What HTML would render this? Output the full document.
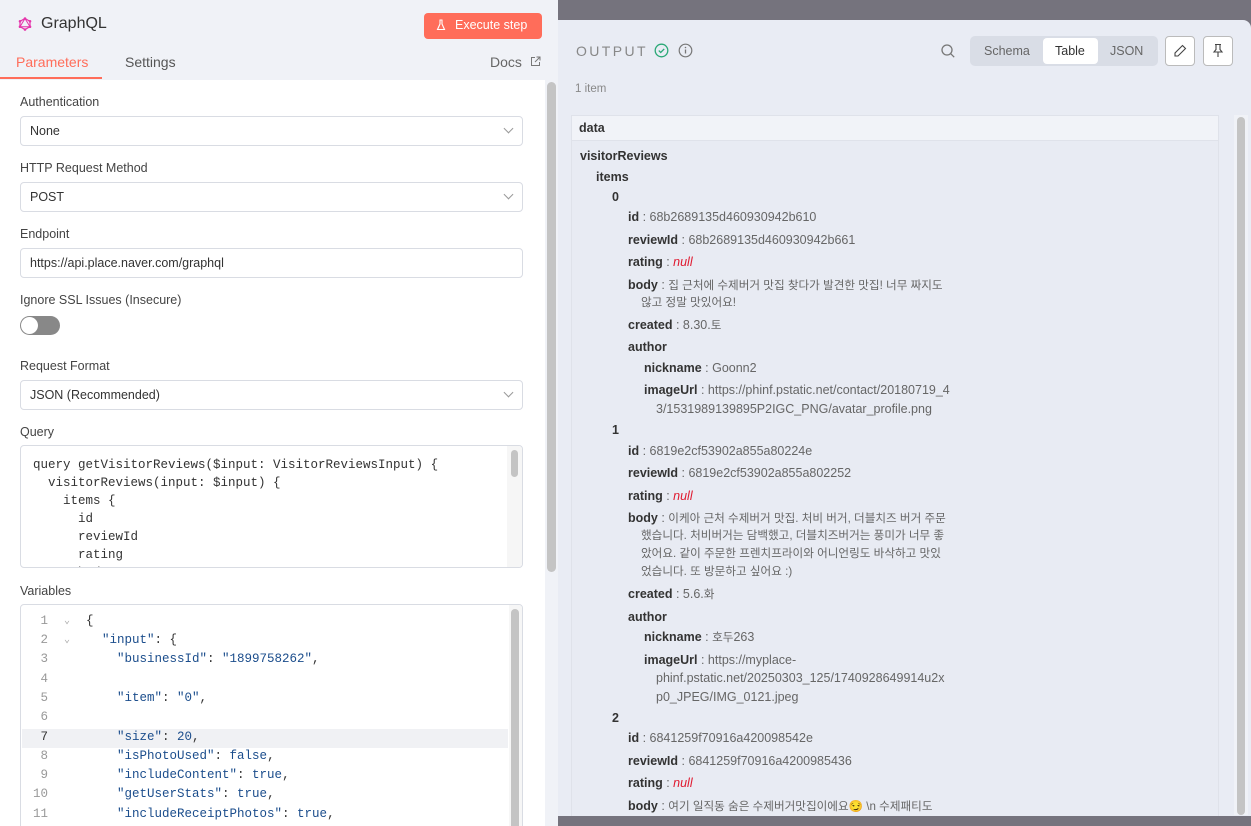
<!DOCTYPE html>
<html><head><meta charset="utf-8"><style>
*{box-sizing:border-box;margin:0;padding:0}
body{width:1251px;height:826px;overflow:hidden;background:#75737d;font-family:"Liberation Sans","Noto Sans CJK KR",sans-serif;font-size:12.5px;color:#333;position:relative}
.a{position:absolute;white-space:nowrap}
#left{position:absolute;left:0;top:0;width:558px;height:826px;background:#fff;overflow:hidden}
#lh{position:absolute;left:0;top:0;width:558px;height:80px;background:#f0f2f7}
.lbl{position:absolute;left:20px;font-size:12.5px;color:#444}
.sel{position:absolute;left:20px;width:503px;height:30px;border:1px solid #d9dce3;border-radius:4px;background:#fff;padding:7px 0 0 9px;color:#333}
.sel .ch{position:absolute;right:10px;top:8px;width:7px;height:7px;border-right:1px solid #999;border-bottom:1px solid #999;transform:rotate(45deg)}
.mono{font-family:"Liberation Mono",monospace;font-size:12.5px}
#right{position:absolute;left:558px;top:20px;width:693px;height:796px;background:#e9ecf4;border-top-right-radius:8px}
.k{font-weight:bold;color:#333}
.v{color:#666}
.r{position:absolute;white-space:nowrap;font-size:12.5px;line-height:16px;height:16px}
.kr{font-size:11.6px}
.n{color:#e0192f;font-style:italic}
.ln{position:absolute;left:20px;width:28px;text-align:right;color:#999}
.cd{position:absolute;left:88px;color:#1b4d8c}
</style></head><body>
<div id="left">
<div id="lh">
<svg class="a" style="left:18px;top:17px" width="14" height="14" viewBox="0 0 14 14"><polygon points="7,1.5 12,4.3 12,9.7 7,12.5 2,9.7 2,4.3" fill="none" stroke="#e535ab" stroke-width="1.2"/><polygon points="7,1.5 12,9.7 2,9.7" fill="none" stroke="#e535ab" stroke-width="1"/><circle cx="7" cy="1.5" r="1.3" fill="#e535ab"/><circle cx="12" cy="4.3" r="1.3" fill="#e535ab"/><circle cx="12" cy="9.7" r="1.3" fill="#e535ab"/><circle cx="7" cy="12.5" r="1.3" fill="#e535ab"/><circle cx="2" cy="9.7" r="1.3" fill="#e535ab"/><circle cx="2" cy="4.3" r="1.3" fill="#e535ab"/></svg>
<div class="a" style="left:41px;top:15px;font-size:16px;color:#333">GraphQL</div>
<div class="a" style="left:424px;top:13px;width:118px;height:26px;background:#ff6d5a;border-radius:4px;color:#fff;font-size:12.5px;padding:5px 0 0 31px">Execute step</div>
<svg class="a" style="left:436px;top:19px" width="10" height="12" viewBox="0 0 10 12"><path d="M3.5 1h3M4 1v4L1.5 10.5h7L6 5V1" fill="none" stroke="#fff" stroke-width="1.1"/></svg>
<div class="a" style="left:16px;top:54px;font-size:14px;color:#ff6d5a">Parameters</div>
<div class="a" style="left:0;top:77px;width:102px;height:2px;background:#ff6d5a"></div>
<div class="a" style="left:125px;top:54px;font-size:14px;color:#555">Settings</div>
<div class="a" style="left:490px;top:54px;font-size:14px;color:#666">Docs</div>
<svg class="a" style="left:530px;top:56px" width="11" height="11" viewBox="0 0 11 11"><path d="M5 1.5H1.5v8h8V6M6.5 1h3.5v3.5M10 1L5 6" fill="none" stroke="#777" stroke-width="1"/></svg>
</div>
<div class="a" style="left:545px;top:80px;width:13px;height:746px;background:#f0f2f7"></div>
<div class="a" style="left:547px;top:82px;width:9px;height:490px;background:#c4c4c4;border-radius:5px"></div>
<div class="lbl" style="top:95px">Authentication</div>
<div class="sel" style="top:116px">None<div class="ch"></div></div>
<div class="lbl" style="top:161px">HTTP Request Method</div>
<div class="sel" style="top:182px">POST<div class="ch"></div></div>
<div class="lbl" style="top:227px">Endpoint</div>
<div class="sel" style="top:248px">https://api.place.naver.com/graphql</div>
<div class="lbl" style="top:293px">Ignore SSL Issues (Insecure)</div>
<div class="a" style="left:20px;top:316px;width:40px;height:19px;border-radius:10px;background:#888"></div>
<div class="a" style="left:21px;top:317px;width:17px;height:17px;border-radius:50%;background:#fff"></div>
<div class="lbl" style="top:359px">Request Format</div>
<div class="sel" style="top:380px">JSON (Recommended)<div class="ch"></div></div>
<div class="lbl" style="top:425px">Query</div>
<div class="a" style="left:20px;top:445px;width:503px;height:123px;border:1px solid #d9dce3;border-radius:4px;overflow:hidden">
<pre class="mono" style="position:absolute;left:12px;top:10px;line-height:18px;color:#333">query getVisitorReviews($input: VisitorReviewsInput) {
  visitorReviews(input: $input) {
    items {
      id
      reviewId
      rating
      body</pre>
<div class="a" style="left:486px;top:0;width:16px;height:122px;background:#f6f6f6"></div>
<div class="a" style="left:490px;top:4px;width:7px;height:27px;background:#c4c4c4;border-radius:4px"></div>
</div>
<div class="lbl" style="top:584px">Variables</div>
<div class="a mono" style="left:20px;top:604px;width:503px;height:230px;border:1px solid #d9dce3;border-radius:4px;overflow:hidden;line-height:19px">
<div class="a" style="left:1px;top:124px;width:486px;height:19px;background:#f0f1f4"></div>
<div class="a" style="left:488px;top:0;width:14px;height:230px;background:#f6f6f6"></div>
<div class="a" style="left:490px;top:4px;width:8px;height:226px;background:#c4c4c4;border-radius:4px"></div>
</div>
<div class="mono" style="position:absolute;left:0;top:612px;width:520px;line-height:19.3px">
<div class="ln" style="top:0">1</div><div class="ln" style="top:19px">2</div><div class="ln" style="top:38px">3</div><div class="ln" style="top:58px">4</div><div class="ln" style="top:77px">5</div><div class="ln" style="top:96px">6</div><div class="ln" style="top:116px;color:#333">7</div><div class="ln" style="top:135px">8</div><div class="ln" style="top:154px">9</div><div class="ln" style="top:173px">10</div><div class="ln" style="top:193px">11</div>
<div class="a" style="left:64px;top:0;color:#aaa;font-size:10px">⌄</div><div class="a" style="left:64px;top:19px;color:#aaa;font-size:10px">⌄</div>
<div class="cd" style="left:86px;top:0;color:#333">{</div>
<div class="cd" style="left:102px;top:19px">"input"<span style="color:#333">: {</span></div>
<div class="cd" style="left:117px;top:38px">"businessId"<span style="color:#333">: </span>"1899758262"<span style="color:#333">,</span></div>
<div class="cd" style="left:117px;top:77px">"item"<span style="color:#333">: </span>"0"<span style="color:#333">,</span></div>
<div class="cd" style="left:117px;top:116px">"size"<span style="color:#333">: </span>20<span style="color:#333">,</span></div>
<div class="cd" style="left:117px;top:135px">"isPhotoUsed"<span style="color:#333">: </span>false<span style="color:#333">,</span></div>
<div class="cd" style="left:117px;top:154px">"includeContent"<span style="color:#333">: </span>true<span style="color:#333">,</span></div>
<div class="cd" style="left:117px;top:173px">"getUserStats"<span style="color:#333">: </span>true<span style="color:#333">,</span></div>
<div class="cd" style="left:117px;top:193px">"includeReceiptPhotos"<span style="color:#333">: </span>true<span style="color:#333">,</span></div>
</div>
</div>

<div id="right"></div>
<div class="a" style="left:576px;top:43px;font-size:14px;letter-spacing:2.4px;color:#888">OUTPUT</div>
<svg class="a" style="left:654px;top:43px" width="15" height="15" viewBox="0 0 15 15"><circle cx="7.5" cy="7.5" r="6.3" fill="none" stroke="#2aa876" stroke-width="1.3"/><path d="M4.8 7.6l1.9 1.9 3.5-3.6" fill="none" stroke="#2aa876" stroke-width="1.3"/></svg>
<svg class="a" style="left:678px;top:43px" width="15" height="15" viewBox="0 0 15 15"><circle cx="7.5" cy="7.5" r="6.3" fill="none" stroke="#777" stroke-width="1.2"/><path d="M7.5 6.5v4" stroke="#777" stroke-width="1.3"/><circle cx="7.5" cy="4.5" r=".8" fill="#777"/></svg>
<svg class="a" style="left:940px;top:43px" width="16" height="16" viewBox="0 0 16 16"><circle cx="7" cy="7" r="5" fill="none" stroke="#777" stroke-width="1.3"/><path d="M10.7 10.7l3.5 3.5" stroke="#777" stroke-width="1.3"/></svg>
<div class="a" style="left:970px;top:36px;width:188px;height:30px;background:#d9dde6;border-radius:5px"></div>
<div class="a" style="left:984px;top:44px;color:#666">Schema</div>
<div class="a" style="left:1043px;top:38px;width:55px;height:26px;background:#fff;border-radius:4px;color:#333;padding:6px 0 0 12px">Table</div>
<div class="a" style="left:1110px;top:44px;color:#666">JSON</div>
<div class="a" style="left:1165px;top:36px;width:30px;height:30px;border:1px solid #bbb;border-radius:4px;background:#fff"></div>
<svg class="a" style="left:1173px;top:44px" width="14" height="14" viewBox="0 0 14 14"><path d="M9.5 1.5l3 3L5 12H2v-3z" fill="none" stroke="#444" stroke-width="1.1"/></svg>
<div class="a" style="left:1203px;top:36px;width:30px;height:30px;border:1px solid #bbb;border-radius:4px;background:#fff"></div>
<svg class="a" style="left:1211px;top:43px" width="14" height="15" viewBox="0 0 14 15"><path d="M4 1.5h6M5 1.5v5L3 9h8L9 6.5v-5M7 9v5" fill="none" stroke="#444" stroke-width="1.1"/></svg>
<div class="a" style="left:575px;top:83px;font-size:11.5px;color:#888">1 item</div>

<div class="a" style="left:571px;top:115px;width:648px;height:711px;border:1px solid #dfe2ea;background:#e8ebf3"></div>
<div class="a" style="left:572px;top:116px;width:646px;height:25px;background:#f1f3f8;border-bottom:1px solid #dfe2ea"></div>
<div class="a k" style="left:579px;top:121px">data</div>
<div class="a" style="left:1234px;top:115px;width:14px;height:700px;background:#f0f2f7"></div>
<div class="a" style="left:1237px;top:117px;width:8px;height:698px;background:#c4c4c4;border-radius:4px"></div>

<div class="r k" style="left:580px;top:148px">visitorReviews</div>
<div class="r k" style="left:596px;top:169px">items</div>
<div class="r k" style="left:612px;top:189px">0</div>
<div class="r" style="left:628px;top:209px"><span class="k">id</span><span class="v"> : 68b2689135d460930942b610</span></div>
<div class="r" style="left:628px;top:232px"><span class="k">reviewId</span><span class="v"> : 68b2689135d460930942b661</span></div>
<div class="r" style="left:628px;top:254px"><span class="k">rating</span><span class="v"> : </span><span class="n">null</span></div>
<div class="r" style="left:628px;top:277px"><span class="k">body</span><span class="v"> : <span class="kr">집 근처에 수제버거 맛집 찾다가 발견한 맛집! 너무 짜지도</span></span></div>
<div class="r v kr" style="left:641px;top:295px">않고 정말 맛있어요!</div>
<div class="r" style="left:628px;top:317px"><span class="k">created</span><span class="v"> : 8.30.<span class="kr">토</span></span></div>
<div class="r k" style="left:628px;top:339px">author</div>
<div class="r" style="left:644px;top:360px"><span class="k">nickname</span><span class="v"> : Goonn2</span></div>
<div class="r" style="left:644px;top:382px"><span class="k">imageUrl</span><span class="v"> : https://phinf.pstatic.net/contact/20180719_4</span></div>
<div class="r v" style="left:656px;top:401px">3/1531989139895P2IGC_PNG/avatar_profile.png</div>
<div class="r k" style="left:612px;top:422px">1</div>
<div class="r" style="left:628px;top:443px"><span class="k">id</span><span class="v"> : 6819e2cf53902a855a80224e</span></div>
<div class="r" style="left:628px;top:465px"><span class="k">reviewId</span><span class="v"> : 6819e2cf53902a855a802252</span></div>
<div class="r" style="left:628px;top:488px"><span class="k">rating</span><span class="v"> : </span><span class="n">null</span></div>
<div class="r" style="left:628px;top:510px"><span class="k">body</span><span class="v"> : <span class="kr">이케아 근처 수제버거 맛집. 처비 버거, 더블치즈 버거 주문</span></span></div>
<div class="r v kr" style="left:641px;top:528px">했습니다. 처비버거는 담백했고, 더블치즈버거는 풍미가 너무 좋</div>
<div class="r v kr" style="left:641px;top:546px">았어요. 같이 주문한 프렌치프라이와 어니언링도 바삭하고 맛있</div>
<div class="r v kr" style="left:641px;top:564px">었습니다. 또 방문하고 싶어요 :)</div>
<div class="r" style="left:628px;top:586px"><span class="k">created</span><span class="v"> : 5.6.<span class="kr">화</span></span></div>
<div class="r k" style="left:628px;top:609px">author</div>
<div class="r" style="left:644px;top:629px"><span class="k">nickname</span><span class="v"> : <span class="kr">호두</span>263</span></div>
<div class="r" style="left:644px;top:652px"><span class="k">imageUrl</span><span class="v"> : https://myplace-</span></div>
<div class="r v" style="left:656px;top:670px">phinf.pstatic.net/20250303_125/1740928649914u2x</div>
<div class="r v" style="left:656px;top:689px">p0_JPEG/IMG_0121.jpeg</div>
<div class="r k" style="left:612px;top:710px">2</div>
<div class="r" style="left:628px;top:730px"><span class="k">id</span><span class="v"> : 6841259f70916a420098542e</span></div>
<div class="r" style="left:628px;top:753px"><span class="k">reviewId</span><span class="v"> : 6841259f70916a4200985436</span></div>
<div class="r" style="left:628px;top:775px"><span class="k">rating</span><span class="v"> : </span><span class="n">null</span></div>
<div class="r" style="left:628px;top:798px"><span class="k">body</span><span class="v"> : <span class="kr">여기 일직동 숨은 수제버거맛집이에요😏 \n 수제패티도</span></span></div>
<div class="a" style="left:558px;top:816px;width:693px;height:10px;background:#75737d"></div>
</body></html>
